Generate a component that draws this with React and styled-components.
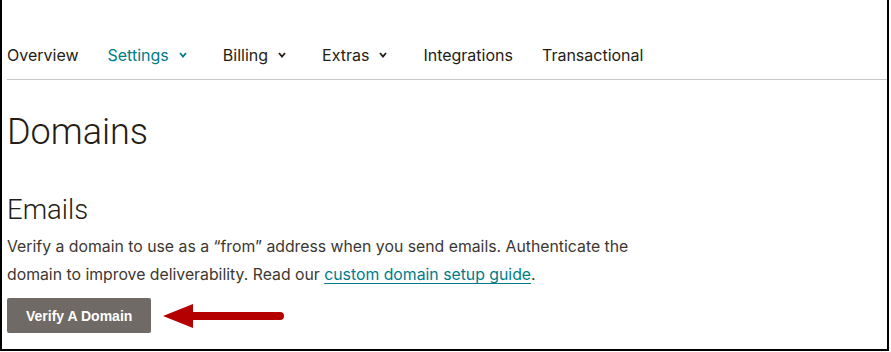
import React from 'react'
import styled, { createGlobalStyle } from 'styled-components'

const GlobalStyle = createGlobalStyle`
    * { box-sizing: border-box; }
    body {
        margin: 0;
        background: #fff;
        font-family: Inter, Roboto, "Liberation Sans", Arial, sans-serif;
        color: #241c15;
    }
`;

const Frame = styled.div`
    width: 889px;
    height: 351px;
    border-left: 2px solid #000;
    border-right: 2px solid #000;
    border-bottom: 2px solid #000;
    background: #fff;
    padding-left: 5px;
    overflow: hidden;
`;

const Nav = styled.nav`
    display: flex;
    align-items: center;
    gap: 29px;
    height: 80px;
    padding-top: 30px;
    border-bottom: 1px solid #c6c6c6;
`;

const NavItem = styled.div`
    display: flex;
    align-items: center;
    font-size: 16px;
    line-height: 26px;
    color: ${p => (p.active ? '#007c89' : '#241c15')};
`;

const Chevron = styled.svg`
    margin-left: 10px;
    margin-right: 7px;
    width: 8px;
    height: 6px;
`;

const Content = styled.div`
    padding-top: 30px;
`;

const Title = styled.h1`
    margin: 0;
    font-family: Roboto, "Liberation Sans", Arial, sans-serif;
    font-size: 36px;
    font-weight: 300;
    line-height: 44px;
`;

const SubTitle = styled.h2`
    margin: 39px 0 0;
    font-family: Roboto, "Liberation Sans", Arial, sans-serif;
    font-size: 27.5px;
    font-weight: 300;
    line-height: 34px;
`;

const Text = styled.p`
    margin: 6px 0 0;
    width: 660px;
    font-size: 15.8px;
    line-height: 28px;
    color: #3d3732;
`;

const Link = styled.a`
    color: #007c89;
    text-decoration: underline;
    text-underline-offset: 3px;
`;

const ActionRow = styled.div`
    display: flex;
    align-items: center;
    gap: 12px;
    margin-top: 9px;
`;

const Button = styled.button`
    height: 35px;
    padding: 0 19px;
    border: none;
    border-radius: 2px;
    background: #6f6a65;
    color: #fff;
    font-family: "Liberation Sans", Arial, sans-serif;
    font-weight: 700;
    font-size: 14px;
    cursor: pointer;
`;

const navItems = [
    { label: 'Overview' },
    { label: 'Settings', menu: true, active: true },
    { label: 'Billing', menu: true },
    { label: 'Extras', menu: true },
    { label: 'Integrations' },
    { label: 'Transactional' },
];

const Arrow = () => (
    <svg width="122" height="26" viewBox="0 0 122 26">
        <polygon points="0,13 30,1 30,25" fill="#b40000" />
        <line x1="28" y1="13" x2="117" y2="13" stroke="#b40000" strokeWidth="8" strokeLinecap="round" />
    </svg>
);

const App = () => {
  return (
    <>
      <GlobalStyle />
      <Frame>
        <Nav>
          {navItems.map(item => (
            <NavItem key={item.label} active={item.active}>
              {item.label}
              {item.menu && (
                <Chevron viewBox="0 0 8 6">
                  <polyline points="1,1 4,4.5 7,1" fill="none" stroke="currentColor" strokeWidth="1.8" />
                </Chevron>
              )}
            </NavItem>
          ))}
        </Nav>
        <Content>
          <Title>Domains</Title>
          <SubTitle>Emails</SubTitle>
          <Text>
            Verify a domain to use as a “from” address when you send emails. Authenticate the
            domain to improve deliverability. Read our <Link href="#">custom domain setup guide</Link>.
          </Text>
          <ActionRow>
            <Button>Verify A Domain</Button>
            <Arrow />
          </ActionRow>
        </Content>
      </Frame>
    </>
  )
}

export default App
